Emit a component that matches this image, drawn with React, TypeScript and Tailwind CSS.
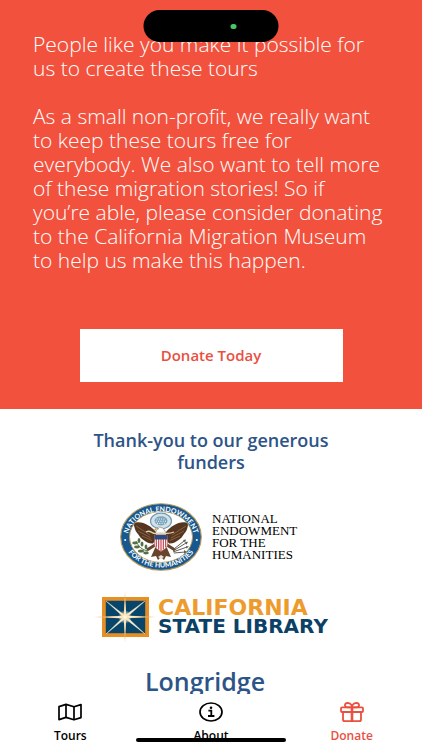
import type { ReactNode } from "react";
import clsx from "clsx";

function MapIcon() {
  return (
    <svg viewBox="0 0 24 20" className="h-5 w-6" fill="none" stroke="currentColor" strokeWidth="1.7" strokeLinejoin="round" aria-hidden>
      <path d="M1 4.6 8 2.4l8 2.4 7-2.2v13l-7 2.2-8-2.4-7 2.2Z" />
      <path d="M8 2.4v13M16 4.8v13" />
    </svg>
  );
}

function InfoIcon() {
  return (
    <svg viewBox="0 0 24 20" className="h-5 w-6" fill="none" stroke="currentColor" strokeWidth="1.7" aria-hidden>
      <ellipse cx="12" cy="10" rx="11" ry="9" />
      <path d="M9.4 8.6h2.9v5M9 14h6.4" strokeWidth="1.8" />
      <circle cx="12" cy="5.7" r="1.3" fill="currentColor" stroke="none" />
    </svg>
  );
}

function GiftIcon() {
  return (
    <svg viewBox="0 0 24 20" className="h-5 w-6" fill="none" stroke="currentColor" strokeWidth="1.8" strokeLinejoin="round" aria-hidden>
      <rect x="1" y="5.4" width="22" height="4.6" rx="1" />
      <path d="M3 10v7.4c0 1 .7 1.7 1.7 1.7h14.6c1 0 1.7-.7 1.7-1.7V10" />
      <path d="M12 5.4V19" strokeWidth="2.6" />
      <path d="M12 5.4C12 3 10.300 1 7.800 1 4.200 1 3.900 5.400 7.600 5.400H12ZM12 5.400C12 3 13.700 1 16.200 1c3.600 0 3.900 4.400.2 4.400H12Z" />
    </svg>
  );
}

/** Eagle seal with the name set around the ring. */
function EndowmentSeal() {
  return (
    <svg viewBox="0 0 82 68" className="h-[68px] w-[82px] shrink-0" role="img" aria-label="National Endowment for the Humanities seal">
      <defs>
        <path id="seal-top" d="M7.500 36A33.500 27.500 0 0 1 74.500 36" />
        <path id="seal-bottom" d="M3 33A38 31.500 0 0 0 79 33" />
      </defs>
      <ellipse cx="41" cy="34" rx="40.3" ry="33.3" fill="#16588f" stroke="#b79a5a" strokeWidth="1.1" />
      <ellipse cx="41" cy="34" rx="31.5" ry="25.5" fill="#fff" stroke="#b79a5a" strokeWidth="1" />
      <g fill="#fff" className="font-['Lato'] text-[7px] font-bold">
        <text textAnchor="middle">
          <textPath href="#seal-top" startOffset="50%">NATIONAL ENDOWMENT</textPath>
        </text>
        <text textAnchor="middle">
          <textPath href="#seal-bottom" startOffset="50%">FOR THE HUMANITIES</textPath>
        </text>
      </g>
      <circle cx="5.2" cy="37" r="1" fill="#fff" />
      <circle cx="76.8" cy="37" r="1" fill="#fff" />
      {/* glory of stars */}
      <ellipse cx="41" cy="18" rx="10.5" ry="7.8" fill="#d3e2ea" stroke="#6f9bb4" strokeWidth="1.2" />
      <ellipse cx="41" cy="17.8" rx="6.5" ry="4.6" fill="#7aa5bd" />
      <path d="M36.500 16h9M35.800 18.200h10.400M37 20.300h8" stroke="#fff" strokeWidth="1" strokeDasharray="1 1.3" />
      {/* wings */}
      <path d="M36 29C31 23 23 18 16 19.500c-2 .7-2.400 2.500-1.600 4.500.6 3 1.800 5 3.600 7 1.600 2.500 3 4.500 5.500 6 2.500 2 5 3.600 9.500 3.500l3-4Z" fill="#573620" />
      <path d="M46 29c5-6 13-11 20-9.500 2 .7 2.400 2.500 1.600 4.500-.6 3-1.800 5-3.600 7-1.600 2.500-3 4.500-5.500 6-2.500 2-5 3.600-9.500 3.500l-3-4Z" fill="#573620" />
      <path d="m16 23 14 9M18 28l13 7M22 33l10 4.500M66 23l-14 9M64 28l-13 7M60 33l-10 4.500" stroke="#957352" strokeWidth=".7" />
      {/* tail and legs */}
      <path d="m35 45-4 9 5-1 2 4 3-3 3 3 2-4 5 1-4-9Z" fill="#67452d" />
      <path d="m35 42-8 5m20-5 8 5" stroke="#67452d" strokeWidth="3" />
      <path d="m38 54 3-2 3 2-3 2Z" fill="#e8e1d4" />
      {/* head */}
      <path d="M35.500 31c.3-3 1.500-4.700 3.300-5.400-1.700-.1-3 .6-4 1.200.7-2 3-3 5.400-2.600 3.600.4 5 3.400 5.600 6.800Z" fill="#fff" stroke="#8c8170" strokeWidth=".7" />
      <path d="m36.500 25.500-3 1.400 2.600.7" fill="#d6a33b" />
      <path d="M26 29c5-3 6 3 11 1.300 6-2 9 2.300 17-1.300" fill="none" stroke="#e1d4b5" strokeWidth="1.3" />
      {/* shield */}
      <path d="M34.500 32h13v10c0 3-4 5-6.500 6.500-2.500-1.500-6.500-3.500-6.500-6.500Z" fill="#fff" stroke="#b04242" strokeWidth=".6" />
      <path d="M36.300 36v8.500M38.700 36v10.500M41 36v12M43.300 36v10.500M45.700 36v8.500" stroke="#bc3541" strokeWidth="1.1" />
      <path d="M34.500 32h13v4.500h-13Z" fill="#294c80" />
      {/* olive branch and arrows */}
      <path d="M16 38c2 5 6 9 12 10" fill="none" stroke="#557044" strokeWidth="1" />
      <g fill="#557044">
        <ellipse cx="15" cy="40" rx="2.8" ry="1.4" />
        <ellipse cx="19" cy="37.5" rx="1.4" ry="2.5" />
        <ellipse cx="17" cy="44" rx="3" ry="1.4" />
        <ellipse cx="22" cy="41" rx="1.5" ry="2.6" />
        <ellipse cx="21" cy="48" rx="3" ry="1.5" />
        <ellipse cx="26" cy="44" rx="1.4" ry="2.4" />
        <ellipse cx="26" cy="50" rx="2.8" ry="1.4" />
      </g>
      <path d="m53 48 13-8M53 49l14-5M54 50l11-1M54 46l10-8" stroke="#625e57" strokeWidth="1" />
      <path d="m63 37 3-.6-1 3M65 39l3-.3-1.500 3M66 43l3 .6-2.600 2M64 47l3 2-3 1.600" fill="#625e57" />
    </svg>
  );
}

function StarEmblem() {
  return (
    <svg viewBox="0 0 62 52" className="h-[52px] w-[62px] shrink-0" aria-hidden>
      <defs>
        <radialGradient id="glow">
          <stop offset="0" stopColor="#fff" />
          <stop offset=".35" stopColor="#f6e5bd" />
          <stop offset="1" stopColor="#f6e5bd" stopOpacity="0" />
        </radialGradient>
      </defs>
      <rect x="9.500" y="7.5" width="44" height="37" fill="#07456b" stroke="#e68f24" strokeWidth="3" />
      <rect x="11.5" y="9.5" width="40" height="33" fill="none" stroke="#b97b2e" strokeWidth="1" />
      <path d="m12 10 19 14.500L51 10 33 26l18 17-20-15.500L12 43l17.500-17Z" fill="#f7edcf" stroke="#f7edcf" strokeWidth=".4" />
      <path d="M31 0l1.200 24.500L62 26l-29.800 1.200L31 52l-1.200-24.500L0 26l29.800-1.200Z" fill="#eab365" />
      <path d="M31 7l1 17.700L53 26l-21 1L31 45l-1-17.700L9 26l21-1Z" fill="#fff6df" />
      <circle cx="31" cy="26" r="7" fill="url(#glow)" />
    </svg>
  );
}

type Tab = { label: string; icon: ReactNode; active?: boolean };

const tabs: Tab[] = [
  { label: "Tours", icon: <MapIcon /> },
  { label: "About", icon: <InfoIcon /> },
  { label: "Donate", icon: <GiftIcon />, active: true },
];

function TabBar() {
  return (
    <nav className="relative grid shrink-0 grid-cols-3 bg-white pt-2">
      {tabs.map((tab) => (
        <a
          key={tab.label}
          href={`#${tab.label.toLowerCase()}`}
          aria-current={tab.active ? "page" : undefined}
          className={clsx(
            "flex flex-col items-center gap-1 pb-1 text-xs leading-5 font-semibold",
            tab.active ? "text-[#e9503f]" : "text-black",
          )}
        >
          {tab.icon}
          {tab.label}
        </a>
      ))}
      <div className="absolute bottom-2 left-1/2 h-1 w-[150px] -translate-x-1/2 rounded-full bg-black" />
    </nav>
  );
}

export default function App() {
  return (
    <div className="relative flex h-screen flex-col overflow-hidden bg-white font-['Open_Sans',sans-serif]">
      <div className="absolute top-[10px] left-1/2 z-10 h-8 w-[135px] -translate-x-1/2 rounded-full bg-black">
        <span className="absolute top-[14px] right-[42px] h-[5px] w-[6px] rounded-full bg-[#44c868]" />
      </div>

      <main className="min-h-0 flex-1 overflow-hidden">
        <section className="bg-[#f2523d] px-8 pt-8 pb-[27px]">
          <div className="space-y-6 pr-1 pl-px text-[21px] leading-6 font-[350] text-white">
            <p>People like you make it possible for us to create these tours</p>
            <p>
              As a small non-profit, we really want to keep these tours free for everybody. We also
              want to tell more of these migration stories! So if you’re able, please consider
              donating to the California Migration Museum to help us make this happen.
            </p>
          </div>
          <button
            type="button"
            className="mx-auto mt-[57px] block h-[53px] w-3/4 max-w-[263px] bg-white text-[15px] font-semibold text-[#e9503f]"
          >
            Donate Today
          </button>
        </section>

        <section className="flex flex-col items-center px-[75px] pt-5">
          <h2 className="text-center text-lg leading-[22px] font-semibold text-[#2d5487]">
            Thank-you to our generous funders
          </h2>
          <div className="mt-[30px] flex items-center gap-[10px]">
            <EndowmentSeal />
            <p className="w-[90px] font-['Liberation_Serif',serif] text-[13px] leading-3 text-black">
              NATIONAL
              <br />
              ENDOWMENT
              <br />
              FOR THE
              <br />
              HUMANITIES
            </p>
          </div>
          <div className="mt-5 flex items-center gap-[2px]">
            <StarEmblem />
            <p className="font-['DejaVu_Sans',sans-serif] font-bold whitespace-nowrap">
              <span className="block text-[22px] leading-[18px] text-[#ee9b2d]">CALIFORNIA</span>
              <span className="block text-[20px] leading-[18px] text-[#0b4166]">STATE LIBRARY</span>
            </p>
          </div>
          <h3 className="mt-5 pr-3 text-[25px] leading-9 font-semibold text-[#2d5487]">Longridge</h3>
        </section>
      </main>

      <TabBar />
    </div>
  );
}
